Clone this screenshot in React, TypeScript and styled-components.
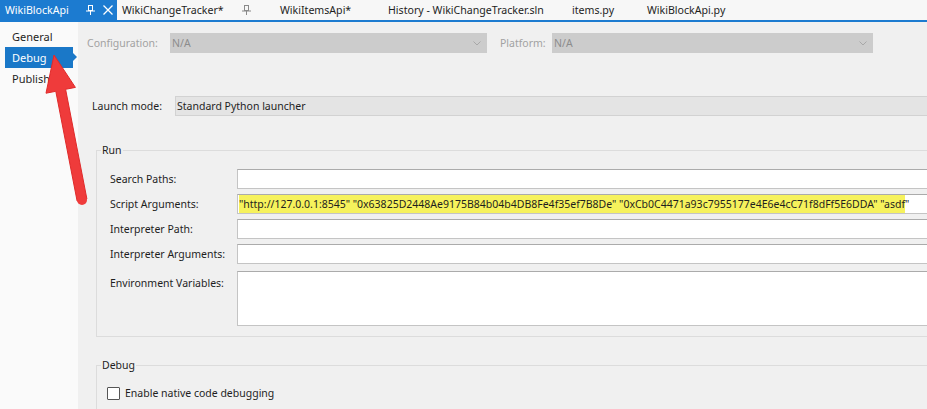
import React from "react";
import styled, { createGlobalStyle } from "styled-components";

const Global = createGlobalStyle`
  html, body { margin: 0; padding: 0; background: #f0f0f0; }
  body { font-family: "Noto Sans", "Segoe UI", sans-serif; font-size: 10.5px; color: #1e1e1e; }
  * { box-sizing: border-box; }
`;

const Root = styled.div`
  position: relative;
  width: 927px;
  height: 409px;
  overflow: hidden;
  display: flex;
  flex-direction: column;
  background: #f0f0f0;
  white-space: nowrap;
`;

const TabBar = styled.div`
  display: flex;
  height: 22px;
  background: #f7f7f7;
  border-bottom: 2px solid #1c7bd0;
  flex-shrink: 0;
  font-size: 10.6px;
`;

const Tab = styled.div<{ $w: number; $active?: boolean }>`
  width: ${(p) => p.$w}px;
  flex-shrink: 0;
  display: flex;
  align-items: center;
  padding-left: 5px;
  height: 20px;
  background: ${(p) => (p.$active ? "#1c7bd0" : "transparent")};
  color: ${(p) => (p.$active ? "#ffffff" : "#1e1e1e")};
`;

const TabTitle = styled.span<{ $w: number }>`
  width: ${(p) => p.$w}px;
  flex-shrink: 0;
`;

const TabIcon = styled.span`
  display: flex;
  align-items: center;
  justify-content: center;
  width: 18px;
  height: 16px;
`;

const Body = styled.div`
  flex: 1;
  display: flex;
  min-height: 0;
`;

const SideNav = styled.div`
  width: 78px;
  flex-shrink: 0;
  background: #fafafa;
  padding: 4px 0 0 5px;
  display: flex;
  flex-direction: column;
  font-size: 11px;
`;

const NavItem = styled.div<{ $selected?: boolean }>`
  position: relative;
  width: 68px;
  height: 21px;
  padding-left: 7px;
  display: flex;
  align-items: center;
  background: ${(p) => (p.$selected ? "#1a78c8" : "transparent")};
  color: ${(p) => (p.$selected ? "#ffffff" : "#1e1e1e")};
  &::after {
    content: "";
    display: ${(p) => (p.$selected ? "block" : "none")};
    position: absolute;
    right: -4px;
    top: 6px;
    border-left: 4px solid #1a78c8;
    border-top: 4px solid transparent;
    border-bottom: 4px solid transparent;
  }
`;

const Main = styled.div`
  flex: 1;
  min-width: 0;
  padding: 11px 0 0 9px;
  display: flex;
  flex-direction: column;
`;

const ConfigRow = styled.div`
  display: flex;
  align-items: center;
  height: 20px;
`;

const DimLabel = styled.span<{ $w: number; $ml?: number }>`
  width: ${(p) => p.$w}px;
  margin-left: ${(p) => p.$ml ?? 0}px;
  flex-shrink: 0;
  color: #a2a2a2;
`;

const Dropdown = styled.div<{ $w: number }>`
  width: ${(p) => p.$w}px;
  height: 20px;
  flex-shrink: 0;
  background: #cccccc;
  display: flex;
  align-items: center;
  justify-content: space-between;
  padding: 0 6px 0 2px;
  color: #8c8c8c;
`;

const Separator = styled.div`
  height: 1px;
  margin: 7px 0 0 -4px;
  background: #c9c9c9;
  box-shadow: 0 1px 0 #fafafa;
`;

const LaunchRow = styled.div`
  display: flex;
  align-items: center;
  margin-top: 36px;
  padding-left: 5px;
  height: 20px;
`;

const Label = styled.span<{ $w: number }>`
  width: ${(p) => p.$w}px;
  flex-shrink: 0;
`;

const ReadonlyBox = styled.div`
  flex: 1;
  height: 20px;
  background: #e4e4e4;
  border: 1px solid #d2d2d2;
  border-right: none;
  display: flex;
  align-items: center;
  padding-left: 1px;
`;

const Group = styled.fieldset<{ $mt: number }>`
  margin: ${(p) => p.$mt}px -20px 0 9px;
  padding: 0;
  border: 1px solid #dcdcdc;
  min-width: 0;
`;

const Legend = styled.legend`
  margin-left: 4px;
  padding: 0 1px;
  line-height: 16px;
`;

const GroupBody = styled.div`
  padding: 11px 0 10px 13px;
  display: flex;
  flex-direction: column;
  gap: 5px;
`;

const FieldRow = styled.div<{ $tall?: boolean }>`
  display: flex;
  align-items: ${(p) => (p.$tall ? "flex-start" : "center")};
  margin-top: ${(p) => (p.$tall ? 2 : 0)}px;
`;

const FieldLabel = styled.span<{ $tall?: boolean }>`
  width: 127px;
  flex-shrink: 0;
  padding-top: ${(p) => (p.$tall ? 5 : 0)}px;
`;

const TextBox = styled.div<{ $h?: number }>`
  flex: 1;
  height: ${(p) => p.$h ?? 20}px;
  background: #ffffff;
  border: 1px solid #c4c4c4;
  border-top-color: #ababab;
  display: flex;
  align-items: center;
  padding-left: 1px;
  overflow: hidden;
`;

const Highlight = styled.span`
  background: #f6f25c;
  line-height: 18px;
`;

const CheckRow = styled.label`
  display: flex;
  align-items: center;
  gap: 5px;
  padding: 13px 0 10px 10px;
`;

const CheckBox = styled.span`
  width: 13px;
  height: 13px;
  border: 1px solid #555;
  background: #fff;
  border-radius: 1px;
  display: inline-block;
`;

const ArrowLayer = styled.svg`
  position: absolute;
  left: 0;
  top: 0;
  pointer-events: none;
`;

const Chevron = () => (
  <svg width="8" height="5" viewBox="0 0 8 5">
    <path d="M0.5 0.5 L4 4 L7.5 0.5" fill="none" stroke="#a8a8a8" strokeWidth="1" />
  </svg>
);

const Pin = ({ color }: { color: string }) => (
  <svg width="9" height="10" viewBox="0 0 9 10">
    <rect x="2.5" y="0.5" width="4" height="5" fill="none" stroke={color} strokeWidth="1" />
    <line x1="0" y1="6" x2="9" y2="6" stroke={color} strokeWidth="1" />
    <line x1="4.5" y1="6" x2="4.5" y2="10" stroke={color} strokeWidth="1" />
  </svg>
);

const Close = () => (
  <svg width="10" height="10" viewBox="0 0 10 10">
    <path d="M0.5 0.5 L9.5 9.5 M9.5 0.5 L0.5 9.5" stroke="#ffffff" strokeWidth="1.3" />
  </svg>
);

export default function App() {
  return (
    <Root>
      <Global />
      <TabBar>
        <Tab $w={117} $active>
          <TabTitle $w={76}>WikiBlockApi</TabTitle>
          <TabIcon><Pin color="#ffffff" /></TabIcon>
          <TabIcon><Close /></TabIcon>
        </Tab>
        <Tab $w={158}>
          <TabTitle $w={115}>WikiChangeTracker*</TabTitle>
          <TabIcon><Pin color="#8a8a8a" /></TabIcon>
        </Tab>
        <Tab $w={108}>WikiItemsApi*</Tab>
        <Tab $w={184}>History - WikiChangeTracker.sln</Tab>
        <Tab $w={75}>items.py</Tab>
        <Tab $w={120}>WikiBlockApi.py</Tab>
      </TabBar>
      <Body>
        <SideNav>
          <NavItem>General</NavItem>
          <NavItem $selected>Debug</NavItem>
          <NavItem>Publish</NavItem>
        </SideNav>
        <Main>
          <ConfigRow>
            <DimLabel $w={83}>Configuration:</DimLabel>
            <Dropdown $w={317}>
              <span>N/A</span>
              <Chevron />
            </Dropdown>
            <DimLabel $w={52} $ml={13}>Platform:</DimLabel>
            <Dropdown $w={321}>
              <span>N/A</span>
              <Chevron />
            </Dropdown>
          </ConfigRow>
          <Separator />
          <LaunchRow>
            <Label $w={83}>Launch mode:</Label>
            <ReadonlyBox>Standard Python launcher</ReadonlyBox>
          </LaunchRow>
          <Group $mt={26}>
            <Legend>Run</Legend>
            <GroupBody>
              <FieldRow>
                <FieldLabel>Search Paths:</FieldLabel>
                <TextBox />
              </FieldRow>
              <FieldRow>
                <FieldLabel>Script Arguments:</FieldLabel>
                <TextBox>
                  <Highlight>
                    "http://127.0.0.1:8545" "0x63825D2448Ae9175B84b04b4DB8Fe4f35ef7B8De" "0xCb0C4471a93c7955177e4E6e4cC71f8dFf5E6DDA" "asdf
                  </Highlight>
                  "
                </TextBox>
              </FieldRow>
              <FieldRow>
                <FieldLabel>Interpreter Path:</FieldLabel>
                <TextBox />
              </FieldRow>
              <FieldRow>
                <FieldLabel>Interpreter Arguments:</FieldLabel>
                <TextBox />
              </FieldRow>
              <FieldRow $tall>
                <FieldLabel $tall>Environment Variables:</FieldLabel>
                <TextBox $h={55} />
              </FieldRow>
            </GroupBody>
          </Group>
          <Group $mt={20}>
            <Legend>Debug</Legend>
            <CheckRow>
              <CheckBox />
              Enable native code debugging
            </CheckRow>
          </Group>
        </Main>
      </Body>
      <ArrowLayer width="120" height="220" viewBox="0 0 120 220">
        <polygon
          points="54,55 46,93.2 55.8,91.3 77.1,201 86.9,199 65.6,89.3 75.4,87.4"
          fill="#ef3b3b"
          stroke="#e02a2a"
          strokeWidth="1"
          strokeLinejoin="round"
        />
        <circle cx="82" cy="200" r="5" fill="#ef3b3b" />
      </ArrowLayer>
    </Root>
  );
}
